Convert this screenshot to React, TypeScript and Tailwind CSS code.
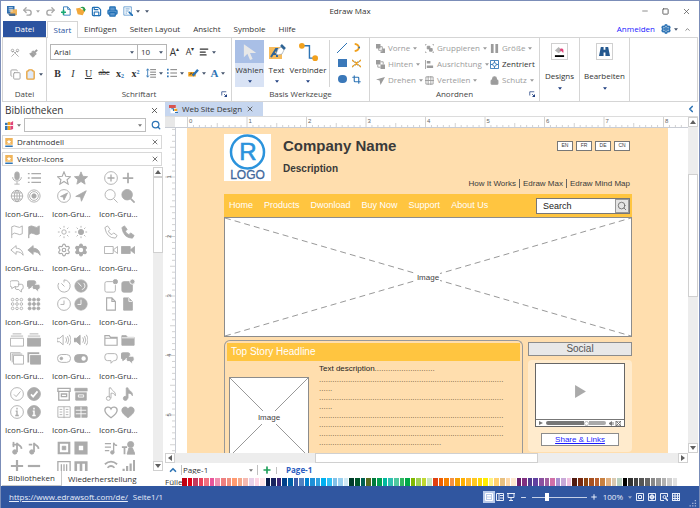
import React from 'react';
import type { ReactNode } from 'react';
import {
  AlignLeft, ChevronLeft, ChevronUp, Clipboard, Copy, Crop, Lock, Minus, Paintbrush, Phone, Plus,
  Printer, Redo2, Save, Scissors, Search, Send, Settings, Square, Undo2, X,
} from 'lucide-react';

/* ---------- small shared pieces ---------- */

function Arrow({ className = 'text-slate-600' }: { className?: string }) {
  return (
    <svg viewBox="0 0 6 4" className={`h-[3px] w-[4px] shrink-0 ${className}`} aria-hidden="true">
      <path d="M0 0h6L3 4z" fill="currentColor" />
    </svg>
  );
}

function Tool({ label, children, className = '' }: { label: string; children: ReactNode; className?: string }) {
  return (
    <button type="button" aria-label={label} className={`flex shrink-0 items-center justify-center gap-[3px] ${className}`}>
      {children}
    </button>
  );
}

function Launcher() {
  return (
    <svg viewBox="0 0 8 8" className="size-[6px] text-[#1f3f80]" fill="none" stroke="currentColor" aria-hidden="true">
      <path d="M1 6V1h6M4 4l3 3" />
      <path d="M8 4v4H4z" fill="currentColor" stroke="none" />
    </svg>
  );
}

function ScrollArrow({ label, rotate }: { label: string; rotate: string }) {
  return (
    <button type="button" aria-label={label} className="flex size-[10px] shrink-0 items-center justify-center border border-[#d0d0d0] bg-white">
      <svg viewBox="0 0 6 4" className={`h-[4px] w-[6px] text-[#606060] ${rotate}`} aria-hidden="true">
        <path d="M0 4h6L3 0z" fill="currentColor" />
      </svg>
    </button>
  );
}

/* ---------- title bar and tabs ---------- */

function TitleBar() {
  return (
    <header className="relative flex h-5 shrink-0 items-center justify-between pr-2 pl-[6px]">
      <div className="flex items-center gap-[5px] text-[#1f6fb5]">
        <svg viewBox="0 0 12 12" className="size-[10px]" aria-hidden="true">
          <path d="M0 0h9v9H0z" fill="#2e6fb0" />
          <path d="M4 4h8v7H4z" fill="#f0b45a" />
          <path d="M2 2h5M2 4h5M2 6h5" stroke="#dce8f5" />
          <path d="M1 9h9v3H3z" fill="#4a6a8a" />
        </svg>
        <Tool label="Rückgängig" className="text-[#a8a8a8]">
          <Undo2 size={11} strokeWidth={3} />
          <Arrow className="text-[#a8a8a8]" />
        </Tool>
        <Tool label="Wiederholen" className="text-[#a8a8a8]"><Redo2 size={11} strokeWidth={3} /></Tool>
        <Tool label="Neu">
          <svg viewBox="0 0 12 12" className="size-[10px]" fill="none" aria-hidden="true">
            <path d="M3 1h5l3 3v7H3z" stroke="#1f6fb5" />
            <path d="M8 1v3h3" stroke="#1f6fb5" />
            <path d="M0 7.500h6M3 4.500v6" stroke="#19a974" strokeWidth="2" />
          </svg>
        </Tool>
        <Tool label="Öffnen">
          <svg viewBox="0 0 12 12" className="size-[10px]" aria-hidden="true">
            <path d="M0 3l5-1 1 2 5 1-3 6-6-1z" fill="#f2a83b" />
            <path d="M5 2c3-2 6-1 6 2h1l-2 3-2-3h1c0-1-2-2-4-2z" fill="#2a9b4a" />
          </svg>
        </Tool>
        <Tool label="Speichern"><Save size={11} strokeWidth={2.500} /></Tool>
        <Tool label="Drucken"><Printer size={11} strokeWidth={2.500} fill="#5a95cc" /></Tool>
        <Tool label="Vorschau">
          <svg viewBox="0 0 12 12" className="size-[10px]" fill="none" stroke="#5a95cc" aria-hidden="true">
            <path d="M1 1h9v10H1zM3 3.500h5M3 6h4M3 8.500h2" />
            <path d="M7 7l5 5" stroke="#1f6fb5" strokeWidth="2" />
          </svg>
          <Arrow />
        </Tool>
        <Arrow />
      </div>
      <h1 className="pointer-events-none absolute inset-x-0 text-center text-[8px] text-[#333]">Edraw Max</h1>
      <div className="flex items-center gap-[13px] text-[#555]">
        <Tool label="Minimieren"><Minus size={8} /></Tool>
        <Tool label="Maximieren"><Square size={7} strokeWidth={3} /></Tool>
        <Tool label="Schließen"><X size={9} /></Tool>
      </div>
    </header>
  );
}

function MenuTabs() {
  return (
    <nav className="flex h-4 shrink-0 items-stretch pr-2 pl-[2px] text-[8px] text-[#333]">
      <button type="button" className="w-[43px] bg-[#2b53a0] text-white">Datei</button>
      <button type="button" className="relative z-10 ml-[1px] -mb-px w-[31px] border border-b-0 border-[#d5d5d5] bg-white text-[#2b53a0]">Start</button>
      <div className="flex grow items-center gap-[13px] pl-[6px]">
        <button type="button">Einfügen</button>
        <button type="button">Seiten Layout</button>
        <button type="button">Ansicht</button>
        <button type="button">Symbole</button>
        <button type="button">Hilfe</button>
      </div>
      <div className="flex items-center gap-[6px]">
        <a href="#anmelden" className="text-[#1a1aff]">Anmelden</a>
        <Tool label="Optionen" className="text-[#2e74b5]"><Settings size={10} strokeWidth={4} /><Arrow /></Tool>
        <Tool label="Menüband einklappen" className="text-[#777]"><ChevronUp size={7} strokeWidth={3} /></Tool>
      </div>
    </nav>
  );
}

/* ---------- ribbon ---------- */

function RibbonGroup({ label, className, launcher, children }: { label: string; className: string; launcher?: boolean; children: ReactNode }) {
  return (
    <section aria-label={label} className={`flex shrink-0 flex-col border-r border-[#d5d5d5] ${className}`}>
      <div className="min-h-0 grow">{children}</div>
      <div className="relative flex h-[15px] shrink-0 items-center justify-center text-[#444]">
        {label}
        {launcher && <button type="button" aria-label={`${label} öffnen`} className="absolute right-[4px]"><Launcher /></button>}
      </div>
    </section>
  );
}

function FontGroup() {
  return (
    <div className="flex flex-col gap-[5px] pt-[6px] pl-[3px]">
      <div className="flex h-[16px] items-center">
        <select aria-label="Schriftart" defaultValue="Arial" className="h-full w-[88px] appearance-none border border-[#b5b5b5] px-[3px]">
          <option>Arial</option>
        </select>
        <Arrow className="mr-[4px] -ml-[8px] text-slate-600" />
        <select aria-label="Schriftgröße" defaultValue="10" className="h-full w-[29px] appearance-none border border-l-0 border-[#b5b5b5] px-[3px]">
          <option>10</option>
        </select>
        <Arrow className="mr-[4px] -ml-[8px] text-slate-600" />
        <Tool label="Schrift vergrößern" className="w-[15px] text-[10px]">A<sup className="-ml-[3px] text-[6px]">▴</sup></Tool>
        <Tool label="Schrift verkleinern" className="w-[16px] text-[9px]">A<sup className="-ml-[3px] text-[6px]">▾</sup></Tool>
        <Tool label="Ausrichtung" className="w-[18px]"><AlignLeft size={10} strokeWidth={3} /><Arrow /></Tool>
      </div>
      <div className="flex h-[16px] items-center font-['Liberation_Serif',serif] text-[10px] text-[#333]">
        <Tool label="Fett" className="w-[15px]"><b>B</b></Tool>
        <Tool label="Kursiv" className="w-[16px]"><i>I</i></Tool>
        <Tool label="Unterstrichen" className="w-[15px]"><u>U</u></Tool>
        <Tool label="Durchgestrichen" className="w-[16px]"><s className="text-[8px]">abc</s></Tool>
        <Tool label="Tiefgestellt" className="w-[16px]"><span className="font-bold">x<sub className="text-[6px] text-[#2e74b5]">2</sub></span></Tool>
        <Tool label="Hochgestellt" className="w-[15px]"><span className="font-bold">x<sup className="text-[6px] text-[#2e74b5]">2</sup></span></Tool>
        <Tool label="Zeilenabstand" className="w-[22px]">
          <svg viewBox="0 0 12 12" className="size-[10px]" fill="none" aria-hidden="true">
            <path d="M5 2h7M5 5h7M5 8h7M5 11h7" stroke="#666" />
            <path d="M2 1v10M0.500 3L2 1l1.500 2M0.500 9L2 11l1.500-2" stroke="#2e74b5" />
          </svg>
          <Arrow />
        </Tool>
        <Tool label="Aufzählung" className="w-[21px]">
          <svg viewBox="0 0 12 12" className="size-[10px]" fill="none" aria-hidden="true">
            <path d="M4 2h8M4 6h8M4 10h8" stroke="#666" />
            <path d="M0 2h2M0 6h2M0 10h2" stroke="#2e74b5" strokeWidth="2" />
          </svg>
          <Arrow />
        </Tool>
        <Tool label="Hervorheben" className="w-[22px]">
          <svg viewBox="0 0 14 12" className="h-[9px] w-[11px]" aria-hidden="true">
            <path d="M0 4h10v6H0z" fill="#f2a11d" />
            <path d="M2 8l2-3 2 3M7 5v3" stroke="#333" fill="none" />
            <path d="M6 9l7-8" stroke="#2e74b5" strokeWidth="3" />
          </svg>
          <Arrow />
        </Tool>
        <Tool label="Schriftfarbe" className="w-[20px]"><b className="text-[11px] text-[#2e74b5]">A</b><Arrow /></Tool>
      </div>
    </div>
  );
}

function BasicTools() {
  return (
    <div className="flex h-full items-start pt-[2px] pl-[3px] text-[#333]">
      <button type="button" className="flex h-[47px] w-[29px] flex-col items-center bg-[#d9e3f5]">
        <span className="flex h-[23px] w-full items-center justify-center bg-[#a9bfe6]">
          <svg viewBox="0 0 16 20" className="h-[18px] w-[14px]" aria-hidden="true">
            <path d="M1 1v15l4-4 3 7 3-1-3-7h7z" fill="#e8e8e8" />
          </svg>
        </span>
        <span className="leading-[14px]">Wählen</span>
        <Arrow className="mt-[3px] text-[#1f3f80]" />
      </button>
      <button type="button" className="flex h-[47px] w-[25px] flex-col items-center">
        <span className="flex h-[23px] items-center">
          <svg viewBox="0 0 18 16" className="h-[16px] w-[18px]" aria-hidden="true">
            <path d="M1 3h13v12H1z" fill="#f6bb5c" />
            <path d="M3 13L8 5h1v8M5 10h4" stroke="#2e6496" strokeWidth="2" fill="none" />
            <path d="M8 10l2-5 3-2 3 3-2 4-4 1z" fill="#fff" stroke="#9aa5b0" strokeWidth="0.700" />
            <path d="M13 1l4 4" stroke="#2e6496" strokeWidth="2.500" />
          </svg>
        </span>
        <span className="leading-[14px]">Text</span>
        <Arrow className="mt-[3px] text-[#1f3f80]" />
      </button>
      <button type="button" className="flex h-[47px] w-[38px] flex-col items-center">
        <span className="flex h-[23px] items-center">
          <svg viewBox="0 0 20 20" className="size-[19px]" aria-hidden="true">
            <path d="M3 4h8v13h6" fill="none" stroke="#2e74b5" strokeWidth="1.500" />
            <circle cx="3" cy="4" r="3" fill="#f2a11d" />
            <circle cx="17" cy="17" r="3" fill="#f2a11d" />
          </svg>
        </span>
        <span className="leading-[14px]">Verbinder</span>
        <Arrow className="mt-[3px] text-[#1f3f80]" />
      </button>
      <div className="ml-[2px] grid h-[47px] grow grid-cols-2 grid-rows-3 place-items-center border-l border-[#d5d5d5] px-[5px] text-[#2e74b5]">
        <Tool label="Linie"><svg viewBox="0 0 10 10" className="size-[10px]"><path d="M0 10L10 0" stroke="currentColor" /></svg></Tool>
        <Tool label="Bogen">
          <svg viewBox="0 0 10 10" className="size-[9px]" fill="none">
            <path d="M3 1c6 1 6 7 0 8" stroke="#f2a11d" strokeWidth="2" />
            <circle cx="8" cy="5" r="1" fill="#2e74b5" />
          </svg>
        </Tool>
        <Tool label="Rechteck"><span className="h-[8px] w-[9px] bg-[#3a78b9]" /></Tool>
        <Tool label="Knoten">
          <svg viewBox="0 0 10 10" className="size-[9px]" fill="none">
            <path d="M0 1q5 6 10 0M0 9q5-6 10 0" stroke="#2e74b5" />
            <path d="M3 3l4 4M7 3L3 7M0 9l2-2M8 7l2 2M0 1l2 2M8 3l2-2" stroke="#f2a11d" strokeWidth="1.500" />
          </svg>
        </Tool>
        <Tool label="Ellipse"><span className="h-[8px] w-[9px] rounded-full bg-[#3a78b9]" /></Tool>
        <Tool label="Zuschneiden"><Crop size={9} strokeWidth={3} /></Tool>
      </div>
    </div>
  );
}

function ArrangeItem({ icon, label, arrow = true, active = false }: { icon: ReactNode; label: string; arrow?: boolean; active?: boolean }) {
  return (
    <button type="button" className={active ? 'flex items-center gap-[3px] text-[#333]' : 'flex items-center gap-[3px] text-[#9b9b9b]'}>
      {icon}
      <span>{label}</span>
      {arrow && <Arrow className="text-[#9b9b9b]" />}
    </button>
  );
}

function ArrangeSvg({ children }: { children: ReactNode }) {
  return <svg viewBox="0 0 10 10" className="size-[9px] shrink-0" fill="none" stroke="currentColor" aria-hidden="true">{children}</svg>;
}

function ArrangeGroup() {
  return (
    <div className="mt-[2px] grid h-[48px] grid-cols-[49px_65px_47px] grid-rows-3 pl-[6px]">
      <ArrangeItem label="Vorne" icon={<ArrangeSvg><path d="M0 0h5v5H0zM7 5h3v5H5V8h2z" fill="currentColor" stroke="none" /><path d="M3 3h4v4H3z" /></ArrangeSvg>} />
      <ArrangeItem label="Gruppieren" icon={<ArrangeSvg><path d="M0 2V0h2M8 0h2v2M10 8v2H8M2 10H0V8" /><path d="M2.500 2.500h3v3h-3zM5 5h3v3H5z" fill="currentColor" /></ArrangeSvg>} />
      <ArrangeItem label="Größe" icon={<ArrangeSvg><path d="M1 0h3v10H1zM6 0h3v10H6z" fill="currentColor" stroke="none" /></ArrangeSvg>} />
      <ArrangeItem label="Hinten" icon={<ArrangeSvg><path d="M0 0h5v5H0zM5 5h5v5H5z" fill="currentColor" stroke="none" /><path d="M5 2h3v3M2 5v3h3" /></ArrangeSvg>} />
      <ArrangeItem label="Ausrichtung" icon={<ArrangeSvg><path d="M0.500 0v10" /><path d="M2 1h4v3H2zM2 6h7v3H2z" fill="currentColor" stroke="none" /></ArrangeSvg>} />
      <ArrangeItem label="Zentriert" arrow={false} active icon={<svg viewBox="0 0 10 10" className="size-[9px] shrink-0" fill="none" stroke="#2e74b5" aria-hidden="true"><path d="M0.500 0.500h9v9h-9z" /><circle cx="5" cy="5" r="2" /><path d="M5 1v2M5 7v2M1 5h2M7 5h2" /></svg>} />
      <ArrangeItem label="Drehen" icon={<ArrangeSvg><path d="M0 4l10-3-5 9-1-5z" fill="currentColor" stroke="none" /></ArrangeSvg>} />
      <ArrangeItem label="Verteilen" icon={<ArrangeSvg><path d="M1 1h8v8H1zM0 5h10M3.500 0v10M6.500 0v10" /></ArrangeSvg>} />
      <ArrangeItem label="Schutz" icon={<Lock size={9} strokeWidth={3} fill="currentColor" className="shrink-0" />} />
    </div>
  );
}

function BigButton({ label, className, children }: { label: string; className: string; children: ReactNode }) {
  return (
    <button type="button" className={`flex shrink-0 flex-col items-center border-r border-[#d5d5d5] pt-[5px] text-[#333] ${className}`}>
      <span className="flex size-[17px] items-center justify-center border border-[#d0d0d0]">{children}</span>
      <span className="mt-[9px] leading-[14px]">{label}</span>
      <Arrow className="mt-[4px] text-[#1f3f80]" />
    </button>
  );
}

function Ribbon() {
  return (
    <div className="mx-[1px] flex h-[65px] shrink-0 items-stretch overflow-hidden border border-[#d5d5d5] text-[8px] text-[#333]">
      <RibbonGroup label="Datei" className="w-[44px]">
        <div className="grid grid-cols-2 grid-rows-2 place-items-center gap-y-[3px] px-[3px] pt-[6px] text-[#a0a0a0]">
          <Tool label="Ausschneiden" className="h-[16px]"><Scissors size={10} className="rotate-90" /></Tool>
          <Tool label="Format übertragen" className="h-[16px]"><Paintbrush size={9} fill="currentColor" /></Tool>
          <Tool label="Kopieren" className="h-[18px]"><Copy size={11} /></Tool>
          <Tool label="Einfügen" className="h-[18px]"><Clipboard size={11} strokeWidth={3} color="#e8a33c" fill="#dfe9f7" /><Arrow /></Tool>
        </div>
      </RibbonGroup>
      <RibbonGroup label="Schriftart" className="w-[185px]" launcher><FontGroup /></RibbonGroup>
      <RibbonGroup label="Basis Werkzeuge" className="w-[138px]"><BasicTools /></RibbonGroup>
      <RibbonGroup label="Anordnen" className="w-[170px]" launcher><ArrangeGroup /></RibbonGroup>
      <BigButton label="Designs" className="w-[40px]">
        <svg viewBox="0 0 12 12" className="size-[11px]" aria-hidden="true">
          <path d="M1 5l4-4 4 4-4 3z" fill="#b5b5b5" />
          <path d="M7 3c3-1 4 1 3 5-1-2-2-3-4-3z" fill="#e0457b" />
          <path d="M1 10h10v2H1z" fill="#000" />
        </svg>
      </BigButton>
      <BigButton label="Bearbeiten" className="w-[50px]">
        <svg viewBox="0 0 12 12" className="size-[11px]" fill="#24588f" aria-hidden="true">
          <path d="M2 1h3v3h2V1h3l2 10H7V7H5v4H0z" />
        </svg>
      </BigButton>
    </div>
  );
}

/* ---------- library panel ---------- */

const NOTE = 'M6 12.500V2c0 3 6 3 5 7';
const STAR = 'M8 1l2 5 5.500.5-4 3.500 1.200 5L8 12l-4.700 3 1.200-5-4-3.500L6 6z';
const REPLY = 'M7 3L1 8l6 5v-3c4 0 6 1 8 4-.5-5-3-8-8-8z';
const FILE = 'M3 1h6l4 4v10H3z';
const FOLDER = 'M1 3h5l1.500 2H15v9H1z';
const HEART = 'M8 14.500C3 11 1 8.500 1 6c0-4 5.500-5 7-1.500C9.500 1 15 2 15 6c0 2.500-2 5-7 8.500z';
const BUBBLES = 'M2 2h6q2 0 2 2v3q0 2-2 2H5l-3 2V9Q0 9 0 7V4q0-2 2-2z';
const BUBBLE2 = 'M9 6h4q2 0 2 2v2q0 2-2 2v3l-3-3H8q-2 0-2-2V8';
const RAYS = 'M8 1v2M8 13v2M1 8h2M13 8h2M3 3l1.500 1.500M11.500 11.500L13 13M3 13l1.500-1.500M11.500 4.500L13 3';
const WAVES = 'M10 5q2 3 0 6M12 3.500q3 4.500 0 9M14 2q4 6 0 12';
const SPEAKER = 'M0 6v4h3l4 3.500v-11L3 6z';
const DOTS = [3, 8, 13];

const ROWS: ReactNode[][][] = [
  [
    [
      <><rect x="5.500" y="1" width="5" height="9" rx="2.500" fill="currentColor" /><path d="M3 7c0 6 10 6 10 0M8 12v3M5 15h6" /></>,
      <path d="M5 3h11M5 8h11M5 13h11M1 3h2M1 8h2M1 13h2" strokeWidth="1.500" />,
      <><circle cx="8" cy="8" r="6.500" /><ellipse cx="8" cy="8" rx="3" ry="6.500" /><path d="M1 8h14M8 1v14M2.500 4.500h11M2.500 11.500h11" /></>,
      <><circle cx="8" cy="8" r="7" /><circle cx="8" cy="8" r="5" /><circle cx="8" cy="8" r="2.500" fill="currentColor" /></>,
    ],
    [
      <path d={STAR} strokeWidth="1.300" />,
      <path d={STAR} fill="currentColor" />,
      <><circle cx="8" cy="8" r="7.300" /><path d="M4 8.500l8-4-4 8-.7-3.300z" fill="currentColor" /></>,
      <path d="M2 8.500L14 2 8.500 14l-1-5z" fill="currentColor" />,
    ],
    [
      <><circle cx="8" cy="8" r="7.300" /><path d="M8 4v8M4 8h8" strokeWidth="1.500" /></>,
      <path d="M8 2v12M2 8h12" strokeWidth="2" />,
      <><circle cx="7" cy="6.500" r="5.800" /><path d="M11 11l4.500 4.500" /></>,
      <><circle cx="7" cy="6.500" r="6" fill="currentColor" /><path d="M11 11l4.500 4.500" strokeWidth="2" /></>,
    ],
  ],
  [
    [
      <path d="M2 15V2q3-2 6 0t6-1v9q-3 2-6 0t-6 1" />,
      <path d="M2 15V2q3-2 6 0t6-1v9q-3 2-6 0t-6 1z" fill="currentColor" />,
      <path d={REPLY} />,
      <path d={REPLY} fill="currentColor" />,
    ],
    [
      <><circle cx="8" cy="8" r="2.500" /><path d={RAYS} /></>,
      <><circle cx="8" cy="8" r="3" fill="currentColor" /><path d={RAYS} /></>,
      <Settings width={16} height={16} strokeWidth={2} />,
      <><Settings width={16} height={16} strokeWidth={2} fill="currentColor" /><circle cx="8" cy="8" r="2.500" fill="#fff" stroke="none" /></>,
    ],
    [
      <path d="M1 3l3-2 3 4-2 2q1 3 4 4l2-2 4 3-2 3Q3 15 1 3z" />,
      <path d="M1 3l3-2 3 4-2 2q1 3 4 4l2-2 4 3-2 3Q3 15 1 3z" fill="currentColor" />,
      <path d="M0.500 4h10v8h-10zM10.500 8l5-4v8z" />,
      <path d="M0.500 4h10v8h-10zM10.500 8l5-4v8z" fill="currentColor" />,
    ],
  ],
  [
    [
      <><path d={BUBBLES} /><path d={BUBBLE2} /></>,
      <><path d={BUBBLES} fill="currentColor" /><path d={BUBBLE2} fill="currentColor" stroke="#fff" /></>,
      <>{DOTS.map((x) => DOTS.map((y) => <circle key={`${x}${y}`} cx={x} cy={y} r="1.500" />))}</>,
      <>{DOTS.map((x) => DOTS.map((y) => <circle key={`${x}${y}`} cx={x} cy={y} r="1.700" fill="currentColor" />))}</>,
    ],
    [
      <><path d="M8 1a7 7 0 1 1-6 3.500" /><path d="M5 5l3.500 3.500M8 1v3" /></>,
      <><circle cx="8" cy="8" r="7" fill="currentColor" /><path d="M4.500 4l4 4.500M11 4.500c3 3 1 7-2 7.500" stroke="#fff" /></>,
      <><circle cx="8" cy="8" r="7.300" /><path d="M8 4v4.500H4" /></>,
      <><circle cx="8" cy="8" r="7" fill="currentColor" /><path d="M8 3v5.500H4" stroke="#fff" /></>,
    ],
    [
      <><path d="M10 3H3Q1 3 1 5v8q0 2 2 2h8q2 0 2-2V7" /><circle cx="13" cy="3" r="2.500" fill="currentColor" /></>,
      <><rect x="1" y="3" width="12" height="12" rx="2" fill="currentColor" /><circle cx="13" cy="3" r="3" fill="currentColor" stroke="#fff" /></>,
      <path d={`${FILE}M9 1v4h4`} strokeWidth="1.300" />,
      <><path d={FILE} fill="currentColor" /><path d="M9 1v4h4" stroke="#fff" /></>,
    ],
  ],
  [
    [
      <path d="M0.500 6h15v9h-15zM1 3.500h14M3 1h10" />,
      <><path d="M0.500 6h15v9h-15z" fill="currentColor" /><path d="M1 3.500h14M3 1h10" /></>,
      <path d="M4 5h11.500v10H4zM2.500 13V3.500H14M0.500 11V2H12" />,
      <><path d="M4 5h11.500v10H4z" fill="currentColor" /><path d="M1.500 13V2.500H14" strokeWidth="2" /></>,
    ],
    [
      <><path d={SPEAKER} /><path d={WAVES} /></>,
      <><path d={SPEAKER} fill="currentColor" /><path d={WAVES} /></>,
      <><rect x="0.500" y="4" width="15" height="9" rx="4.500" /><circle cx="5" cy="8.500" r="1.500" fill="currentColor" /></>,
      <><rect x="0.500" y="4" width="15" height="9" rx="4.500" fill="currentColor" /><circle cx="11" cy="8.500" r="2.500" fill="#fff" stroke="none" /></>,
    ],
    [
      <path d={`${FOLDER}M1 6h14`} strokeWidth="1.300" />,
      <><path d={FOLDER} fill="currentColor" /><path d="M1 5.500h14" stroke="#fff" /></>,
      <path d="M4 3h8q3 0 3 3v2q0 3-3 3h-1l-3 3v-3H4q-3 0-3-3V6q0-3 3-3z" />,
      <><path d={BUBBLES} fill="currentColor" /><path d={BUBBLE2} fill="currentColor" stroke="#fff" /></>,
    ],
  ],
  [
    [
      <><circle cx="8" cy="8" r="7.300" /><path d="M4.500 8.500L7 11l5-6" /></>,
      <><circle cx="8" cy="8" r="7.300" fill="currentColor" /><path d="M4.500 8.500L7 11l5-6" stroke="#fff" strokeWidth="2" /></>,
      <><circle cx="8" cy="8" r="7.300" /><path d="M8 3v2M6.500 7H8v5M6 12h4" strokeWidth="1.500" /></>,
      <><circle cx="8" cy="8" r="7.300" fill="currentColor" /><path d="M8 3v2M6.500 7H8v5M6 12h4" stroke="#fff" strokeWidth="1.700" /></>,
    ],
    [
      <path d="M1 1.500h14V5H1zM2 5v10h12V5M5 8h6v3H5z" strokeWidth="1.500" />,
      <><path d="M1 1.500h14V5H1zM2 6h12v9H2z" fill="currentColor" /><path d="M0 5.500h16M5 9h6v2.500H5z" stroke="#fff" /></>,
      <path d="M1 2h14v12H1zM8 2v13M3 5h3M3 8h3M3 11h3M10 5h3M10 8h3M10 11h3" />,
      <><path d="M1 2h14v12H1z" fill="currentColor" /><path d="M8 2v13M2 6h12M2 10h12" stroke="#fff" /></>,
    ],
    [
      <><path d="M6 12V1h2c0 3 6 4 5 9-1-2-2-3-5-3v6" /><circle cx="5" cy="13" r="2.300" /></>,
      <><path d="M6 12V1h2c0 3 6 4 5 9-1-2-2-3-5-3v6" fill="currentColor" /><circle cx="5" cy="13" r="2.300" fill="currentColor" /></>,
      <path d={HEART} strokeWidth="1.500" />,
      <path d={HEART} fill="currentColor" />,
    ],
  ],
  [
    [
      <><path d={`${NOTE}M1 4h5`} transform="translate(2 0)" strokeWidth="2" /><path d="M4 1v6" strokeWidth="2" /><circle cx="5.500" cy="12.500" r="2.500" fill="currentColor" /></>,
      <><path d={`${NOTE}M0 4h4`} transform="translate(2 0)" strokeWidth="2" /><circle cx="5.500" cy="12.500" r="2.500" fill="currentColor" /></>,
      <path d="M8 1v14M1 8h14" strokeWidth="2.500" />,
      <path d="M1 8h14" strokeWidth="2.500" />,
    ],
    [
      <><path d="M2 2h12v12H2z" strokeWidth="2.500" /><path d="M6 6h4v4H6z" fill="currentColor" /></>,
      <path d="M3 3h10v10H3z" strokeWidth="5" />,
      <path d="M1 16V3h14v13M5 16V6M8 16V6M11 16V6" strokeWidth="1.500" />,
      <path d="M2 16V4h12v12M8 16V4" strokeWidth="3" />,
    ],
    [
      <><path d="M1 3h7M1 7h7M1 11h5M11 13V2q1 3 4 3" strokeWidth="1.500" /><circle cx="9.500" cy="13" r="2" fill="currentColor" /></>,
      <><path d="M1 7h6M4 7v8" strokeWidth="2" /><circle cx="11" cy="4" r="3.500" fill="currentColor" /><path d="M7 15l2-7h4l3 7z" fill="currentColor" /></>,
      <path d="M1 6q7-6 14 0M4 10q4-4 8 0" strokeWidth="2" />,
      <path d="M3 16v-5M7 16V8M11 16V5M15 16V1" strokeWidth="2.500" />,
    ],
  ],
];

function LibraryHeader({ label }: { label: string }) {
  return (
    <div className="mr-[1px] flex h-[14px] shrink-0 items-center gap-[4px] border border-[#d8d8d8] px-[2px] text-[8px]">
      <svg viewBox="0 0 10 12" className="h-[9px] w-[8px]" aria-hidden="true">
        <path d="M0 0h10v9H0z" fill="#f0b45a" />
        <path d="M0 10h10v2H0z" fill="#2e74b5" />
        <path d="M5 2l1 2h2L6.500 5.500 7 8 5 6.500 3 8l.5-2.500L2 4h2z" fill="#fff" />
      </svg>
      <span className="grow">{label}</span>
      <Tool label={`${label} schließen`}><X size={8} strokeWidth={2} /></Tool>
    </div>
  );
}

function LibraryPanel() {
  return (
    <aside className="flex w-[162px] shrink-0 flex-col overflow-hidden pl-[1px] text-[#333]">
      <div className="flex h-[16px] shrink-0 items-center justify-between pr-[4px] pl-[3px]">
        <h2 className="text-[10px] leading-[14px]">Bibliotheken</h2>
        <Tool label="Bibliotheken schließen"><X size={9} strokeWidth={2} /></Tool>
      </div>
      <div className="flex h-[14px] shrink-0 items-center gap-[3px] pr-[2px] pl-[3px]">
        <Tool label="Bibliothek wählen">
          <svg viewBox="0 0 10 10" className="size-[9px]" aria-hidden="true">
            <path d="M0 2h3v8H0z" fill="#2e74b5" />
            <path d="M3 1h3v9H3z" fill="#f2a11d" />
            <path d="M6 2l3-2v9L6 10z" fill="#e0457b" />
            <path d="M0 5h9" stroke="#fff" />
          </svg>
          <Arrow className="text-[#777]" />
        </Tool>
        <div className="flex h-full grow items-center border border-[#bdbdbd]">
          <input type="text" aria-label="Bibliothek durchsuchen" className="h-full w-0 grow px-1 text-[8px]" />
          <Arrow className="mr-[3px] text-[#777]" />
        </div>
        <Tool label="Suchen" className="pl-[2px] text-[#2e74b5]"><Search size={10} strokeWidth={3} /></Tool>
      </div>
      <div className="mt-[3px] flex shrink-0 flex-col gap-[3px]">
        <LibraryHeader label="Drahtmodell" />
        <LibraryHeader label="Vektor-Icons" />
      </div>
      <div className="mt-[1px] flex min-h-0 grow basis-0">
        <div className="grow basis-0 overflow-hidden pt-[2px] pl-[3px]">
          {ROWS.map((row, r) => (
            <div key={r} className="grid grid-cols-[47px_47px_47px]">
              {row.map((icons, c) => (
                <button type="button" key={c} aria-label="Icon-Gruppe" className="flex flex-col items-start">
                  <span className="ml-[3px] grid grid-cols-[17px_17px] grid-rows-[18px_18px] place-items-center text-[#ababab]">
                    {icons.map((icon, i) => (
                      <svg key={i} viewBox="0 0 16 16" className="size-[14px]" fill="none" stroke="currentColor" aria-hidden="true">{icon}</svg>
                    ))}
                  </span>
                  {r < ROWS.length - 1 && <span className="text-[8px] leading-[18px]">Icon-Gru...</span>}
                </button>
              ))}
            </div>
          ))}
        </div>
        <div className="flex w-[10px] shrink-0 flex-col bg-[#ededed]">
          <ScrollArrow label="Nach oben" rotate="rotate-0" />
          <div className="h-[76px] border border-[#d0d0d0] bg-white" />
          <div className="grow" />
          <ScrollArrow label="Nach unten" rotate="rotate-180" />
        </div>
      </div>
      <div className="flex h-[15px] shrink-0 text-[8px]">
        <button type="button" className="w-[60px] border-r border-b border-[#c8c8c8]">Bibliotheken</button>
        <button type="button" className="px-[6px]">Wiederherstellung</button>
      </div>
    </aside>
  );
}

/* ---------- drawing area ---------- */

const INCH = 59.500;
const RULER_TICKS = Array.from({ length: 100 }, (_, i) => i);

function RulerX() {
  return (
    <svg className="block h-[11px] w-full border-b border-[#c8ccd4] bg-white" aria-hidden="true">
      <rect width="10" height="11" fill="#e8e8e8" />
      {RULER_TICKS.filter((i) => i < 84).map((i) => (
        <path key={i} d={`M${22.500 + (i * INCH) / 10} 11v${i % 10 === 0 ? -11 : i % 5 === 0 ? -5 : -3}`} stroke="#d2d2d2" />
      ))}
      {[0, 1, 2, 3, 4, 5, 6, 7, 8].map((n) => (
        <text key={n} x={24 + n * INCH} y="6" className="fill-[#666] font-['Liberation_Sans',sans-serif] text-[6px]">{n}</text>
      ))}
    </svg>
  );
}

function RulerY() {
  return (
    <svg className="block h-full w-[11px] shrink-0 border-r border-[#c8ccd4] bg-white" aria-hidden="true">
      {RULER_TICKS.map((i) => (
        <path key={i} d={`M10 ${(i * INCH) / 10 - 10.500}h${i % 10 === 0 ? -10 : i % 5 === 0 ? -5 : -3}`} stroke="#d2d2d2" />
      ))}
      {[1, 2, 3, 4, 5].map((n) => (
        <text key={n} transform={`translate(6 ${n * INCH - 9}) rotate(-90)`} className="fill-[#666] font-['Liberation_Sans',sans-serif] text-[6px]">{n}</text>
      ))}
    </svg>
  );
}

function Placeholder({ className, dashed }: { className: string; dashed?: boolean }) {
  return (
    <div className={`relative flex items-center justify-center border border-[#8c8c8c] bg-white ${className}`}>
      <svg viewBox="0 0 100 100" preserveAspectRatio="none" className="absolute inset-0 size-full" aria-hidden="true">
        <path d="M0 0L100 100M0 100L100 0" stroke="#999" vectorEffect="non-scaling-stroke" strokeDasharray={dashed ? '6 4' : undefined} />
      </svg>
      <span className="relative bg-white px-[1px] py-[2px] text-[8px] leading-[9px] text-[#444]">Image</span>
    </div>
  );
}

const STORY_LINES = [83, 6, 83, 6, 83, 83, 83, 55, 83];

function WebPage() {
  return (
    <div className="ml-[11px] w-[481px] shrink-0 bg-[#ffdeae] pr-[36px] pl-[37px] font-['Liberation_Sans',Arial,sans-serif] text-[#3a3a3a]">
      <div className="flex h-[66px] pt-[6px]">
        <svg viewBox="0 0 47 47" className="size-[47px] shrink-0 bg-white" role="img" aria-label="Logo">
          <circle cx="23.500" cy="18" r="16.500" fill="none" stroke="#2b93dc" strokeWidth="2.500" />
          <text x="24" y="26" textAnchor="middle" fill="#2b93dc" stroke="#2b93dc" strokeWidth="0.600" className="text-[24px]">R</text>
          <text x="23.500" y="45" textAnchor="middle" fill="#41689c" stroke="#41689c" strokeWidth="0.300" className="text-[12px]">LOGO</text>
        </svg>
        <div className="grow pt-[3px] pl-[12px]">
          <div className="text-[15px] leading-[18px] font-bold">Company Name</div>
          <div className="mt-[8px] text-[10px] leading-[12px] font-bold">Description</div>
        </div>
        <div className="flex flex-col items-end pt-[7px] pr-[2px]">
          <div className="flex gap-[3px] text-[5px]">
            {['EN', 'FR', 'DE', 'CN'].map((lang) => (
              <button type="button" key={lang} className="h-[10px] w-[16px] border border-[#777] bg-white">{lang}</button>
            ))}
          </div>
          <div className="mt-[28px] flex text-[8px] leading-[9px] whitespace-nowrap">
            <a href="#how" className="border-r border-[#666] pr-[3px]">How It Works</a>
            <a href="#max" className="border-r border-[#666] px-[3px]">Edraw Max</a>
            <a href="#mind" className="pl-[3px]">Edraw Mind Map</a>
          </div>
        </div>
      </div>
      <div className="flex h-[23px] items-center gap-[11px] bg-[#ffc540] px-[5px] text-[9px] text-white">
        <a href="#home">Home</a>
        <a href="#products">Products</a>
        <a href="#download">Dwonload</a>
        <a href="#buy">Buy Now</a>
        <a href="#support">Support</a>
        <a href="#about">About Us</a>
        <div className="-mr-[3px] ml-auto flex h-[16px] w-[94px] items-center border border-[#777] bg-white">
          <input type="text" aria-label="Search" defaultValue="Search" className="h-full w-0 grow pl-[6px] text-[9px] text-[#222]" />
          <button type="button" aria-label="Search" className="flex h-full w-[14px] items-center justify-center border border-[#999] bg-[#e4e4e4] text-[#666]"><Search size={10} /></button>
        </div>
      </div>
      <Placeholder className="h-[120px]" dashed />
      <div className="mt-[3px] flex justify-between">
        <article className="w-[299px] rounded-t-[6px] border border-b-0 border-[#999] px-[2px] pt-[2px]">
          <h3 className="h-[18px] bg-[#ffc540] px-[4px] text-[10px] leading-[18px] text-white">Top Story Headline</h3>
          <div className="flex pt-[3px] pl-[2px]">
            <Placeholder className="mt-[13px] size-[80px] shrink-0" />
            <div className="pl-[10px] text-[8px] leading-[9px] whitespace-nowrap text-[#6b5438]">
              <p className="h-[11px]"><span className="text-[#222]">Text description</span>{'.'.repeat(27)}</p>
              {STORY_LINES.map((count, i) => <p key={i}>{'.'.repeat(count)}</p>)}
            </div>
          </div>
        </article>
        <div className="flex w-[104px] flex-col pt-[2px]">
          <h3 className="h-[14px] border border-[#8c8c8c] bg-[#e8e8e8] text-center text-[10px] leading-[12px] text-[#555]">Social</h3>
          <div className="mt-[4px] flex h-[92px] flex-col items-center rounded-[4px] bg-[#ffebcd] pt-[3px]">
            <div className="flex h-[64px] w-[90px] flex-col border border-[#666] bg-white">
              <button type="button" aria-label="Abspielen" className="flex grow items-center justify-center">
                <svg viewBox="0 0 10 12" className="h-[13px] w-[11px]" aria-hidden="true"><path d="M0 0l10 6-10 6z" fill="#aaa" /></svg>
              </button>
              <div className="flex h-[7px] items-center gap-[3px] border-t border-[#777] px-[3px] text-[#777]">
                <svg viewBox="0 0 5 5" className="size-[4px]" aria-hidden="true"><path d="M0 0l5 2.500L0 5z" fill="currentColor" /></svg>
                <div className="flex grow items-center">
                  <span className="h-[4px] w-[38px] rounded-l-full bg-[#777]" />
                  <span className="size-[5px] rounded-full border border-[#bbb] bg-white" />
                  <span className="h-[4px] grow rounded-r-full bg-[#aaa]" />
                </div>
                <svg viewBox="0 0 12 5" className="h-[5px] w-[12px]" aria-hidden="true">
                  <path d="M0 2l3-2v5L0 3z" fill="currentColor" />
                  <path d="M4 1v3M7 0l5 5M12 0L7 5M7 0h5v5H7z" stroke="currentColor" fill="none" />
                </svg>
              </div>
            </div>
            <a href="#share" className="mt-[6px] h-[13px] w-[78px] border border-[#8c8c8c] bg-white text-center text-[8px] leading-[11px] text-[#1a1aff] underline">Share &amp; Links</a>
          </div>
        </div>
      </div>
    </div>
  );
}

const SWATCHES = [
  '#c00010', '#e00015', '#c23a5e', '#e8405a', '#f07080', '#e8559a', '#f08fb0', '#ee7f80', '#f09080', '#ff9a70', '#f5a88a', '#f5b9b0', '#e8d0e8', '#fdd5e5', '#fde5ea',
  '#0a1a4a', '#1a2560', '#3a2575', '#00408a', '#0060a8', '#3a5aa8', '#5080c0', '#0080d0', '#1e90d8', '#30a0e0', '#00b0f0', '#30c0f5', '#80c0e8', '#9ad0f0', '#d0eaf5',
  '#003c2a', '#00552a', '#006050', '#556b1f', '#007a3c', '#00a050', '#00b8a0', '#30c0b0', '#50c8a0', '#30b860', '#00a848', '#80b800', '#a0d050', '#c0d830', '#c8e6c0',
  '#e04010', '#f06000', '#f58000', '#f59040', '#f5a000', '#ffb000', '#ffb830', '#ffc820', '#ffd800', '#ffee00', '#fff080', '#ffd070', '#e8c080', '#fdd8a8', '#fde8d0',
  '#6a2070', '#803080', '#503a90', '#6040a0', '#8a50a0', '#a060a0', '#d070a8', '#a890d0', '#c8a8d8', '#f0c0e0',
  '#501a10', '#7a2a10', '#8b4513', '#a85020', '#b86030', '#c88040', '#e0b080', '#d8c8b0', '#b8d0c0',
  '#000000', '#333333', '#444444', '#555555', '#666666', '#888888', '#999999', '#b0b0b0', '#cccccc', '#e0e0e0',
];

function Editor() {
  return (
    <main className="ml-[2px] flex min-w-0 grow flex-col pr-[1px] text-[8px] text-[#333]">
      <div className="flex h-[15px] shrink-0 items-center justify-between border-b border-[#dcdcdc]">
        <button type="button" className="flex h-full w-[98px] items-center gap-[4px] bg-[#c6d6ef] pl-[4px]">
          <svg viewBox="0 0 12 12" className="size-[9px]" aria-hidden="true">
            <path d="M0 0h9v4H0z" fill="#d9534f" />
            <path d="M2 4h8v7H2z" fill="#fff" />
            <path d="M3 5h3v3M12 10H8" stroke="#2e74b5" strokeWidth="1.500" fill="none" />
            <path d="M7 5h4v3H7z" fill="#f2a11d" />
          </svg>
          <span>Web Site Design</span>
          <X size={8} strokeWidth={3} className="text-[#666]" />
        </button>
        <Tool label="Bereich öffnen" className="mr-[2px] text-[#2e74b5]"><ChevronLeft size={10} strokeWidth={4} /></Tool>
      </div>
      <div className="flex min-h-0 grow">
        <div className="flex min-w-0 grow flex-col">
          <RulerX />
          <div className="flex min-h-0 grow basis-0 overflow-hidden">
            <RulerY />
            <WebPage />
          </div>
        </div>
        <div className="flex w-[10px] shrink-0 flex-col bg-[#ededed]">
          <ScrollArrow label="Nach oben" rotate="rotate-0" />
          <div className="grow-[47] basis-0" />
          <div className="grow-[122] basis-0 border border-[#d0d0d0] bg-white" />
          <div className="grow-[147] basis-0" />
          <ScrollArrow label="Nach unten" rotate="rotate-180" />
        </div>
      </div>
      <div className="mr-[10px] flex h-[10px] shrink-0 bg-[#ededed]">
        <ScrollArrow label="Nach links" rotate="-rotate-90" />
        <div className="grow-[14] basis-0" />
        <div className="grow-[22] basis-0 border border-[#d0d0d0] bg-white" />
        <div className="grow-[14] basis-0" />
        <ScrollArrow label="Nach rechts" rotate="rotate-90" />
      </div>
      <div className="flex h-[14px] shrink-0 items-center">
        <Tool label="Seiten einblenden" className="w-[16px] text-[#2e74b5]"><ChevronUp size={10} strokeWidth={4} /></Tool>
        <select aria-label="Seite" defaultValue="Page-1" className="h-[10px] w-[77px] appearance-none border-x border-[#c0c0c0] px-[1px] leading-none">
          <option>Page-1</option>
        </select>
        <Arrow className="mr-[5px] -ml-[9px] text-[#777]" />
        <Tool label="Seite hinzufügen" className="w-[18px] text-[#1fa05a]"><Plus size={10} strokeWidth={4} /></Tool>
        <span className="h-[7px] border-l border-[#c0c0c0]" />
        <button type="button" className="ml-[9px] font-bold text-[#2b5cc0]">Page-1</button>
      </div>
      <div className="flex h-[9px] shrink-0 items-center pr-[21px] leading-[9px]">
        <span className="w-[17px] shrink-0 overflow-hidden">Füller</span>
        <div className="flex h-[8px] grow gap-px">
          {SWATCHES.map((color, i) => <span key={i} className="grow" style={{ backgroundColor: color }} />)}
        </div>
      </div>
    </main>
  );
}

/* ---------- status bar ---------- */

function StatusBar() {
  return (
    <footer className="-mx-px flex h-[22px] shrink-0 items-center bg-[#3056a0] pr-[3px] pl-[9px] text-[8px] text-[#e8eefa]">
      <a href="https://www.edrawsoft.com/de/" className="underline">https://www.edrawsoft.com/de/</a>
      <span className="ml-[5px] grow">Seite1/1</span>
      <div className="flex items-center">
        <Tool label="Normalansicht" className="size-[12px] bg-[#b9cbea]">
          <svg viewBox="0 0 8 8" className="size-[8px]" stroke="#fff" fill="none"><path d="M0.500 0.500h7v7h-7zM2 2.500h4M2 4h4M2 5.500h4" /></svg>
        </Tool>
        <Tool label="Seitenansicht" className="w-[11px]">
          <svg viewBox="0 0 8 8" className="size-[8px]" stroke="currentColor" fill="none"><path d="M0.500 0.500h7v7h-7zM3 0v8M4 2.500h3M4 5h3" /></svg>
        </Tool>
        <Tool label="Präsentation" className="w-[11px]">
          <svg viewBox="0 0 8 8" className="size-[8px]" stroke="currentColor" fill="none"><path d="M0 0.500h8M1 1v3.500h6V1M4 5v2M2 7.500h4" /></svg>
        </Tool>
        <Tool label="Verkleinern" className="w-[13px]"><Minus size={7} strokeWidth={3} /></Tool>
        <input
          type="range"
          aria-label="Zoom"
          min="0"
          max="100"
          defaultValue="26"
          className="mx-[2px] h-[9px] w-[55px] appearance-none bg-transparent [&::-webkit-slider-runnable-track]:h-px [&::-webkit-slider-runnable-track]:bg-[#c5d0e6] [&::-webkit-slider-thumb]:-mt-[4px] [&::-webkit-slider-thumb]:h-[8px] [&::-webkit-slider-thumb]:w-[4px] [&::-webkit-slider-thumb]:appearance-none [&::-webkit-slider-thumb]:bg-white"
        />
        <Tool label="Vergrößern" className="w-[10px]"><Plus size={8} strokeWidth={3} /></Tool>
        <Tool label="Zoomstufe" className="mr-[4px] ml-[4px] gap-[5px]">100%<Arrow className="text-[#9aa9c8]" /></Tool>
        <div className="flex gap-[4px]">
          <Tool label="Seite anpassen"><svg viewBox="0 0 8 8" className="size-[8px]" stroke="currentColor" fill="none"><path d="M0.500 0.500h7v7h-7zM2.500 2.500h3v3h-3z" /></svg></Tool>
          <Tool label="Breite anpassen"><svg viewBox="0 0 8 8" className="size-[8px]" stroke="currentColor" fill="none"><path d="M0.500 0.500h7v7h-7zM1 4h6M4 1v6M2.500 2.500h3v3h-3z" /></svg></Tool>
          <Tool label="Auswahl zoomen"><svg viewBox="0 0 8 8" className="size-[8px]" stroke="currentColor" fill="none"><path d="M7.500 4V0.500h-7v7H4" /><circle cx="4.500" cy="4" r="1.500" /><path d="M5.500 5L8 8" strokeWidth="1.500" /></svg></Tool>
          <Tool label="Raster"><svg viewBox="0 0 8 8" className="size-[8px]" stroke="currentColor" fill="none"><path d="M0 0.500h8M0 3h8M0 5.500h8M0 7.500h8M0.500 0v8M3 0v8M5.500 0v8M7.500 0v8" /></svg></Tool>
        </div>
      </div>
      <svg viewBox="0 0 8 8" className="ml-[9px] size-[8px] self-end pb-[1px]" fill="#a9b8d8" aria-hidden="true">
        <path d="M6 0h1.500v1.500H6zM6 3h1.500v1.500H6zM3 3h1.500v1.500H3zM6 6h1.500v1.500H6zM3 6h1.500v1.500H3zM0 6h1.500v1.500H0z" />
      </svg>
    </footer>
  );
}

export default function App() {
  return (
    <div className="flex h-screen flex-col overflow-hidden border border-b-0 border-[#7b8db8] bg-white font-['Open_Sans','Noto_Sans',sans-serif]">
      <TitleBar />
      <MenuTabs />
      <Ribbon />
      <div className="flex min-h-0 grow basis-0">
        <LibraryPanel />
        <Editor />
      </div>
      <StatusBar />
    </div>
  );
}
